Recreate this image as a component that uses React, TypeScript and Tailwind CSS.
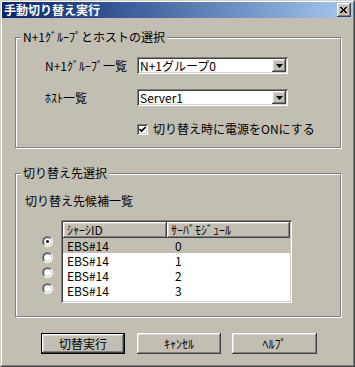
import React from 'react';

const raised =
  'shadow-[inset_-1px_-1px_#404040,inset_1px_1px_#ffffff,inset_-2px_-2px_#808080,inset_2px_2px_#dcd8d0]';
const sunken =
  'shadow-[inset_1px_1px_#808080,inset_-1px_-1px_#ffffff,inset_2px_2px_#404040,inset_-2px_-2px_#d4d0c8]';

function CloseButton() {
  return (
    <div className={`flex h-[14px] w-[14px] items-center justify-center bg-[#c2beb4] ${raised}`}>
      <svg width="8" height="7" viewBox="0 0 8 7">
        <path d="M0 0 L6 6 M1 0 L7 6 M6 0 L0 6 M7 0 L1 6" stroke="#000" strokeWidth="1" />
      </svg>
    </div>
  );
}

function Combo({ value }: { value: string }) {
  return (
    <div className={`flex h-[17px] w-[151px] items-stretch bg-white p-[2px] ${sunken}`}>
      <span className="flex flex-1 items-center pl-[1px] leading-[13px]">{value}</span>
      <div className={`flex w-[14px] items-center justify-center bg-[#c2beb4] ${raised}`}>
        <svg width="7" height="4" viewBox="0 0 7 4">
          <path d="M0 0 H7 L3.5 4 Z" fill="#000" />
        </svg>
      </div>
    </div>
  );
}

function GroupBox({
  label,
  className,
  children,
}: {
  label: string;
  className: string;
  children: React.ReactNode;
}) {
  return (
    <div
      className={`relative ml-[13px] w-[326px] border border-[#808080] shadow-[inset_1px_1px_#ffffff,1px_1px_#ffffff] ${className}`}
    >
      <span className="absolute -top-[8px] left-[5px] bg-[#c2beb4] px-[2px]">{label}</span>
      {children}
    </div>
  );
}

function Radio({ checked }: { checked?: boolean }) {
  return (
    <div className="h-[11px] w-[11px] rounded-full border border-t-[#808080] border-l-[#808080] border-r-white border-b-white">
      <div className="flex h-full w-full items-center justify-center rounded-full border border-t-[#404040] border-l-[#404040] border-r-[#d4d0c8] border-b-[#d4d0c8] bg-white">
        {checked && <div className="h-[3px] w-[3px] rounded-full bg-black" />}
      </div>
    </div>
  );
}

function Button({ label, isDefault, width }: { label: string; isDefault?: boolean; width: string }) {
  return (
    <div className={`${width} h-[21px] ${isDefault ? 'border border-black' : ''}`}>
      <div className={`flex h-full w-full items-center justify-center bg-[#c2beb4] ${raised}`}>
        {label}
      </div>
    </div>
  );
}

const rows = ['0', '1', '2', '3'];

export default function App() {
  return (
    <div className="h-[367px] w-[355px] border border-t-[#d4d0c8] border-l-[#d4d0c8] border-r-[#404040] border-b-[#404040] font-['Noto_Sans_CJK_JP',sans-serif] text-[12px] leading-[14px] text-black">
      <div className="flex h-full flex-col border border-t-white border-l-white border-r-[#808080] border-b-[#808080] bg-[#c2beb4]">
        <div className="flex h-[16px] shrink-0 items-center justify-between bg-linear-to-r from-[#0a246a] to-[#a6caf0] pl-[2px] pr-[2px]">
          <span className="font-bold text-white">手動切り替え実行</span>
          <CloseButton />
        </div>

        <GroupBox label="N+1ｸﾞﾙｰﾌﾟとホストの選択" className="mt-[19px] h-[111px]">
          <div className="mt-[19px] flex items-center">
            <span className="ml-[29px] w-[92px]">N+1ｸﾞﾙｰﾌﾟ一覧</span>
            <Combo value="N+1グループ0" />
          </div>
          <div className="mt-[15px] flex items-center">
            <span className="ml-[29px] w-[92px]">ﾎｽﾄ一覧</span>
            <Combo value="Server1" />
          </div>
          <div className="mt-[16px] flex items-center">
            <div className={`ml-[121px] flex h-[11px] w-[11px] items-center justify-center bg-white ${sunken}`}>
              <svg width="7" height="7" viewBox="0 0 7 7">
                <path d="M0.5 3 L2.5 5 L6.5 1" stroke="#000" strokeWidth="1.6" fill="none" />
              </svg>
            </div>
            <span className="ml-[5px]">切り替え時に電源をONにする</span>
          </div>
        </GroupBox>

        <GroupBox label="切り替え先選択" className="mt-[25px] h-[144px]">
          <div className="ml-[9px] mt-[20px]">切り替え先候補一覧</div>
          <div className="mt-[12px] flex">
            <div className="ml-[26px] flex flex-col gap-[4.67px] pt-[16px]">
              <Radio checked />
              <Radio />
              <Radio />
              <Radio />
            </div>
            <div className={`ml-[8px] flex h-[83px] w-[231px] flex-col bg-white p-[2px] ${sunken}`}>
              <div className="flex h-[16px] shrink-0">
                <div className={`flex w-[104px] items-center bg-[#c2beb4] pl-[4px] ${raised}`}>ｼｬｰｼID</div>
                <div className={`flex flex-1 items-center bg-[#c2beb4] pl-[4px] ${raised}`}>ｻｰﾊﾞﾓｼﾞｭｰﾙ</div>
              </div>
              {rows.map((r, i) => (
                <div
                  key={r}
                  className={`flex h-[15px] items-center leading-[15px] ${i === 0 ? 'bg-[#c2beb4]' : ''}`}
                >
                  <span className="w-[104px] pl-[4px]">EBS#14</span>
                  <span className="pl-[8px]">{r}</span>
                </div>
              ))}
            </div>
          </div>
        </GroupBox>

        <div className="mt-[16px] flex">
          <div className="ml-[39px]">
            <Button label="切替実行" isDefault width="w-[84px]" />
          </div>
          <div className="ml-[12px]">
            <Button label="ｷｬﾝｾﾙ" width="w-[84px]" />
          </div>
          <div className="ml-[11px]">
            <Button label="ﾍﾙﾌﾟ" width="w-[85px]" />
          </div>
        </div>
      </div>
    </div>
  );
}
